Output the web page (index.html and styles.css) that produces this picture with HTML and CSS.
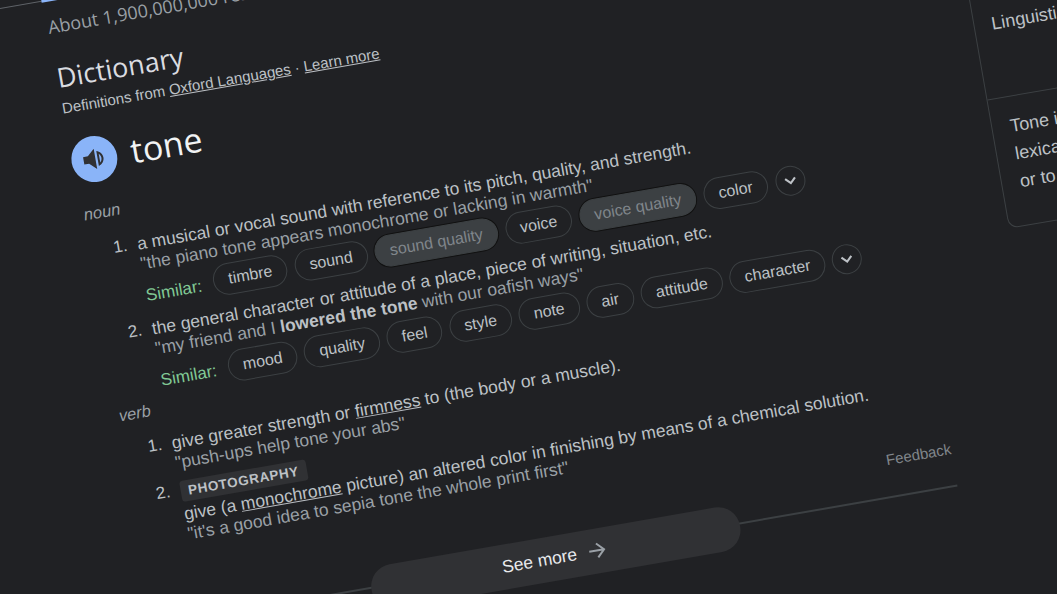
FILE: index.html
```html
<!DOCTYPE html>
<html lang="en">
<head>
<meta charset="utf-8">
<title>tone - Dictionary</title>
<link rel="stylesheet" href="styles.css">
</head>
<body>
<div class="page">
  <div class="topline"><span class="tab-active"></span></div>
  <div class="columns">
    <main class="main">
      <p class="stats">About 1,900,000,000 results</p>
      <h2 class="dict-title">Dictionary</h2>
      <p class="source">Definitions from <a href="#">Oxford Languages</a> · <a href="#">Learn more</a></p>
      <div class="headword">
        <button class="speaker" aria-label="Listen">
          <svg viewBox="0 0 24 24" class="speaker-icon"><path d="M2 8.500v7h4.500l6.500 6V2.500L6.500 8.500H2z"/><path fill-rule="evenodd" d="M15 5v14c3.200-.9 5.500-3.700 5.500-7S18.200 5.900 15 5zm1.800 2.800c1 .9 1.800 2.500 1.800 4.200s-.8 3.300-1.800 4.200V7.800z"/></svg>
        </button>
        <span class="word">tone</span>
      </div>

      <div class="pos pos-noun">noun</div>
      <div class="sense">
        <span class="num">1.</span>
        <div class="body">
          <div class="def">a musical or vocal sound with reference to its pitch, quality, and strength.</div>
          <div class="quote">"the piano tone appears monochrome or lacking in warmth"</div>
          <div class="similar">
            <span class="sim-label">Similar:</span>
            <span class="chip">timbre</span>
            <span class="chip">sound</span>
            <span class="chip chip-off">sound quality</span>
            <span class="chip">voice</span>
            <span class="chip chip-off">voice quality</span>
            <span class="chip">color</span>
            <span class="more"><svg viewBox="0 0 24 24" class="chev"><path d="M6 9l6 6 6-6"/></svg></span>
          </div>
        </div>
      </div>
      <div class="sense">
        <span class="num">2.</span>
        <div class="body">
          <div class="def">the general character or attitude of a place, piece of writing, situation, etc.</div>
          <div class="quote">"my friend and I <b>lowered the tone</b> with our oafish ways"</div>
          <div class="similar similar-tight">
            <span class="sim-label">Similar:</span>
            <span class="chip">mood</span>
            <span class="chip">quality</span>
            <span class="chip">feel</span>
            <span class="chip">style</span>
            <span class="chip">note</span>
            <span class="chip">air</span>
            <span class="chip">attitude</span>
            <span class="chip">character</span>
            <span class="more"><svg viewBox="0 0 24 24" class="chev"><path d="M6 9l6 6 6-6"/></svg></span>
          </div>
        </div>
      </div>

      <div class="pos pos-verb">verb</div>
      <div class="sense">
        <span class="num">1.</span>
        <div class="body">
          <div class="def">give greater strength or <u>firmness</u> to (the body or a muscle).</div>
          <div class="quote">"push-ups help tone your abs"</div>
        </div>
      </div>
      <div class="sense sense-last">
        <span class="num">2.</span>
        <div class="body">
          <span class="tag">PHOTOGRAPHY</span>
          <div class="def">give (a <u>monochrome</u> picture) an altered color in finishing by means of a chemical solution.</div>
          <div class="quote">"it's a good idea to sepia tone the whole print first"</div>
        </div>
      </div>
      <div class="feedback">Feedback</div>
      <div class="see-wrap">
        <button class="see-more">See more
          <svg viewBox="0 0 24 24" class="arrow"><path d="M4 12h15M12 5l7 7-7 7"/></svg>
        </button>
      </div>
    </main>
    <aside class="side">
      <div class="side-top">Linguistics</div>
      <div class="side-body">Tone is the use of pitch in language to distinguish<br>lexical or grammatical meaning<br>or to inflect words.</div>
    </aside>
  </div>
</div>
</body>
</html>
```
FILE: styles.css
```css
* { box-sizing: border-box; }
html, body { margin: 0; height: 100%; overflow: hidden; background: #202124; }
body { width: 1057px; height: 594px; position: relative; font-family: "Liberation Sans", Arial, sans-serif; color: #bdc1c6; }
p, h2 { margin: 0; font-weight: 400; }
a { color: inherit; }
.page { width: 1400px; height: 900px; transform-origin: 0 0; transform: rotate(-9.9deg); }
.topline { height: 1px; margin: 8px 0 0 -30px; background: #5f6368; position: relative; }
.tab-active { position: absolute; left: 72px; top: -1px; width: 60px; height: 3px; background: #8ab4f8; }
.columns { display: flex; }
.main { width: 956px; padding-left: 44px; flex: none; }
.stats { font-family: "Open Sans", sans-serif; font-size: 18px; color: #9aa0a6; margin: 16px 0 0 0; line-height: 20px; white-space: nowrap; }
.dict-title { font-family: "Open Sans", sans-serif; font-size: 27px; line-height: 36px; color: #dadce0; margin-top: 23.600px; }
.source { font-size: 15px; line-height: 20px; margin-top: 3.500px; }
.headword { display: flex; align-items: flex-start; gap: 14px; margin: 21.500px 0 0; }
.speaker { width: 46px; height: 46px; border-radius: 50%; border: 0; background: #8ab4f8; padding: 0; display: flex; align-items: center; justify-content: center; flex: none; }
.speaker-icon { width: 26px; height: 26px; fill: #303134; }
.word { font-family: "Open Sans", sans-serif; font-size: 34px; line-height: 42px; color: #f1f3f4; margin-top: 0; }
.pos { font-style: italic; font-size: 16.500px; line-height: 20px; color: #9aa0a6; margin-left: 3px; }
.pos-noun { margin-top: 20.300px; margin-bottom: 17.700px; }
.pos-verb { margin-top: 1.400px; margin-bottom: 15.600px; }
.sense { display: flex; margin-top: 3px; }
.sense + .sense { margin-top: 8px; }
.sense-last.sense { margin-top: 8.500px; }
.num { width: 50.500px; text-align: right; padding-right: 10px; font-size: 17px; line-height: 20px; flex: none; }
.body { flex: 1; min-width: 0; font-size: 17.500px; line-height: 20px; }
.def { color: #bdc1c6; white-space: nowrap; }
.quote { color: #9aa0a6; white-space: nowrap; }
.quote b { color: #bdc1c6; }
.similar { display: flex; align-items: center; gap: 7.600px; margin-top: 2.500px; height: 36px; white-space: nowrap; }
.similar-tight { gap: 7.200px; }
.sim-label { color: #81c995; font-size: 17px; margin-right: 4.500px; padding-top: 5px; }
.chip { display: flex; align-items: center; height: 32px; padding: 0 14.200px; border: 1px solid #3c4043; border-radius: 16px; font-size: 16px; }
.chip-off { background: #3c4043; color: #80868b; box-shadow: 0 0 0 1px #111; border-color: #3c4043; }
.more { width: 30px; height: 30px; border: 1px solid #3c4043; border-radius: 50%; display: flex; align-items: center; justify-content: center; }
.chev { width: 20px; height: 20px; fill: none; stroke: #bdc1c6; stroke-width: 2.500; }
.tag { display: inline-block; background: #303134; color: #bdc1c6; font-weight: 700; font-size: 13.500px; letter-spacing: .6px; padding: 0 8px; line-height: 21px; border-radius: 3px; margin-bottom: 2px; }
.feedback { text-align: right; font-size: 15px; line-height: 20px; color: #80868b; margin-top: 28px; width: 817px; }
.see-wrap { position: relative; margin-top: 25.500px; width: 817px; height: 2px; background: #3c4043; }
.see-more { position: absolute; left: 222px; top: -19px; width: 374px; height: 45px; border: 0; border-radius: 22px; background: #303134; color: #e8eaed; font: 17.500px "Liberation Sans", sans-serif; display: flex; align-items: center; justify-content: center; gap: 9px; }
.arrow { width: 24px; height: 24px; fill: none; stroke: #9aa0a6; stroke-width: 2; }
.side { flex: none; width: 380px; margin-top: 113.500px; height: 276px; border: 1px solid #3c4043; border-radius: 10px; font-size: 18px; }
.side-top { height: 145px; padding: 58px 17px 0; line-height: 24px; border-bottom: 1px solid #3c4043; }
.side-body { padding: 15px 18px; line-height: 28px; white-space: nowrap; }
```
